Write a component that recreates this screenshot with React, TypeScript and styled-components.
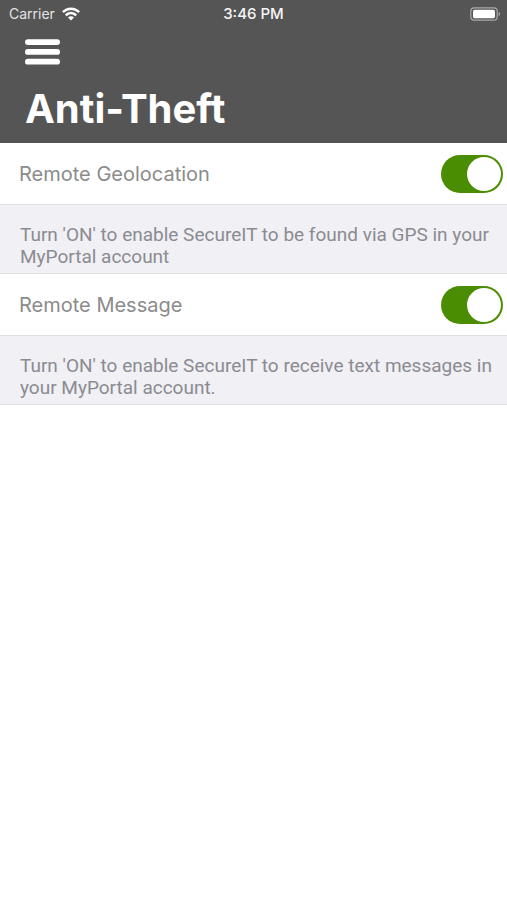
import React, { useState } from "react";
import styled, { createGlobalStyle } from "styled-components";

const GlobalStyle = createGlobalStyle`
  *, *::before, *::after { box-sizing: border-box; }
  body {
    margin: 0;
    background: #fff;
    font-family: Inter, "Liberation Sans", sans-serif;
  }
`;

const Header = styled.header`
  background: #555;
  color: #fff;
  padding-bottom: 9px;
`;

const StatusBar = styled.div`
  display: grid;
  grid-template-columns: 1fr auto 1fr;
  align-items: center;
  height: 28px;
  padding: 0 6px;
  font-size: 14px;
  line-height: 28px;
`;

const Carrier = styled.span`
  display: flex;
  align-items: center;
  gap: 7px;
  padding-left: 3px;
  color: #e4e4e4;
`;

const Clock = styled.time`
  font-size: 15px;
  font-weight: 500;
  color: #f6f6f6;
`;

const BatterySlot = styled.span`
  display: flex;
  justify-content: flex-end;
`;

const MenuButton = styled.button`
  display: flex;
  align-items: center;
  height: 48px;
  margin: 0 0 0 25px;
  padding: 0;
  border: 0;
  background: none;
  color: #fff;
  cursor: pointer;
`;

const Title = styled.h1`
  margin: 8px 0 0 25px;
  font-size: 40px;
  font-weight: 700;
  line-height: 50px;
`;

const SettingRow = styled.label`
  display: flex;
  align-items: center;
  justify-content: space-between;
  min-height: 61px;
  padding: 0 4px 0 19px;
  font-size: 20px;
  line-height: 24px;
  color: #8b8b8b;
  background: #fff;
`;

const Switch = styled.input`
  appearance: none;
  display: flex;
  flex: none;
  align-items: center;
  width: 62px;
  height: 38px;
  margin: 0;
  padding: 2px;
  border-radius: 19px;
  background: #d9d9dc;
  cursor: pointer;

  &::before {
    content: "";
    width: 34px;
    height: 34px;
    border-radius: 50%;
    background: #fff;
  }

  &:checked {
    justify-content: flex-end;
    background: #4b8d02;
  }
`;

const Description = styled.p`
  margin: 0;
  padding: 19px 8px 5px 20px;
  border: solid #e0e0e3;
  border-width: 1px 0;
  background: #f0f0f5;
  color: #8b8b91;
  font-family: Roboto, Inter, sans-serif;
  font-size: 19px;
  line-height: 22px;
`;

const WifiIcon = () => (
  <svg width="18" height="14" viewBox="0 0 18 14" aria-hidden="true">
    <g fill="none" stroke="#fff" strokeWidth="2.5">
      <path d="M0.9 5.2C5.4 0.5 12.6 0.5 17.1 5.2" />
      <path d="M3.8 8.3C6.7 5.2 11.3 5.2 14.2 8.3" />
    </g>
    <path d="M6 10.5C7.6 8.9 10.4 8.9 12 10.5L9 13.6Z" fill="#fff" />
  </svg>
);

const BatteryIcon = () => (
  <svg width="31" height="14" viewBox="0 0 31 14" aria-hidden="true">
    <rect x="0.8" y="0.8" width="26.4" height="12.4" rx="3.4" fill="none" stroke="#aaa" strokeWidth="1.2" />
    <rect x="3" y="2.8" width="22" height="8.4" rx="1.6" fill="#fff" />
    <path d="M28.6 4.8C30.5 5.6 30.5 8.4 28.6 9.2Z" fill="#aaa" />
  </svg>
);

const MenuIcon = () => (
  <svg width="35" height="26" viewBox="0 0 35 26" aria-hidden="true" fill="currentColor">
    <rect y="0.2" width="35" height="5.8" rx="2.9" />
    <rect y="10" width="35" height="5.8" rx="2.9" />
    <rect y="19.8" width="35" height="5.8" rx="2.9" />
  </svg>
);

type SettingProps = { id: string; label: string; description: string };

const Setting = ({ id, label, description }: SettingProps) => {
  const [enabled, setEnabled] = useState(true);
  return (
    <section>
      <SettingRow htmlFor={id}>
        {label}
        <Switch
          id={id}
          type="checkbox"
          role="switch"
          aria-describedby={`${id}-description`}
          checked={enabled}
          onChange={(event) => setEnabled(event.target.checked)}
        />
      </SettingRow>
      <Description id={`${id}-description`}>{description}</Description>
    </section>
  );
};

export default function App() {
  return (
    <>
      <GlobalStyle />
      <Header>
        <StatusBar>
          <Carrier>
            Carrier
            <WifiIcon />
          </Carrier>
          <Clock>3:46 PM</Clock>
          <BatterySlot>
            <BatteryIcon />
          </BatterySlot>
        </StatusBar>
        <MenuButton type="button" aria-label="Menu">
          <MenuIcon />
        </MenuButton>
        <Title>Anti-Theft</Title>
      </Header>
      <main>
        <Setting
          id="remote-geolocation"
          label="Remote Geolocation"
          description="Turn 'ON' to enable SecureIT to be found via GPS in your MyPortal account"
        />
        <Setting
          id="remote-message"
          label="Remote Message"
          description="Turn 'ON' to enable SecureIT to receive text messages in your MyPortal account."
        />
      </main>
    </>
  );
}
